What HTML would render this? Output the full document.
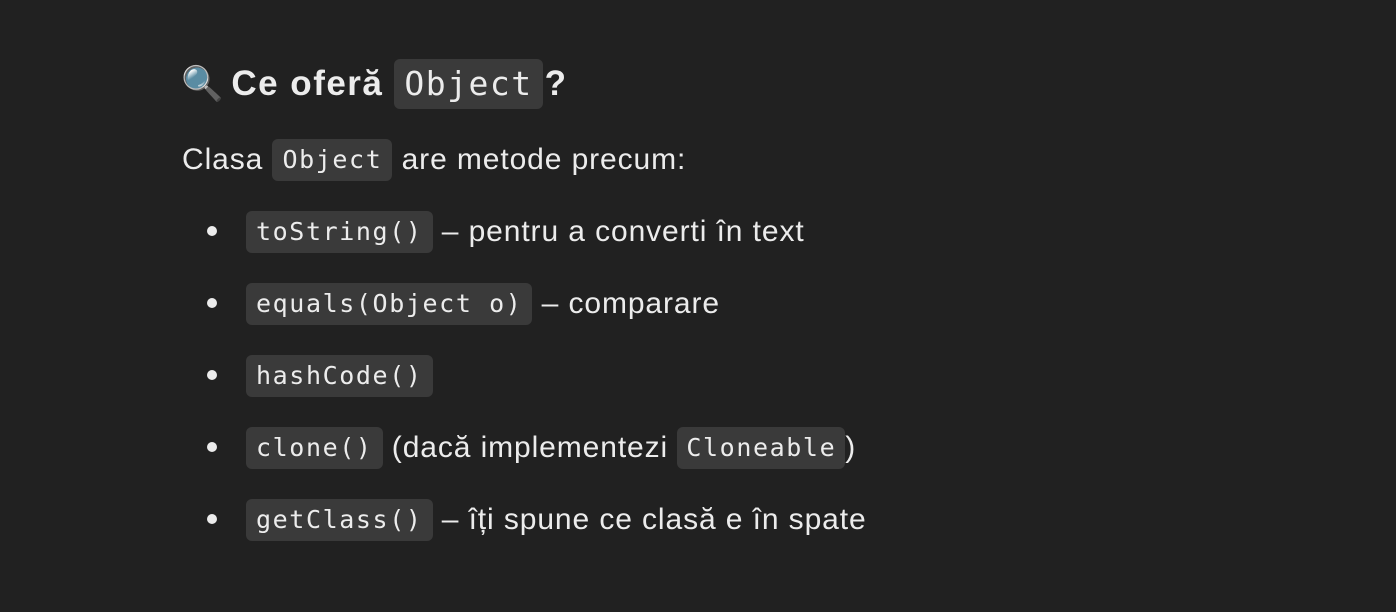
<!DOCTYPE html>
<html><head><meta charset="utf-8"><style>
html,body{margin:0;padding:0;background:#212121;width:1396px;height:612px;overflow:hidden}
body{font-family:"Liberation Sans","DejaVu Sans",sans-serif;color:#ececec;position:relative}
.l{position:absolute;left:0;white-space:nowrap;display:flex;align-items:center}
code{font-family:"DejaVu Sans Mono","Liberation Mono",monospace;background:#3a3a3a;border-radius:6px;color:#ececec}
.b code{font-size:25px;letter-spacing:1.6px;padding:0 10px 0 10px;height:42px;line-height:42px;display:inline-block}
.t{font-size:30px;letter-spacing:0.9px}
.dot{position:absolute;left:207px;width:10px;height:10px;border-radius:50%;background:#ececec}
</style></head><body>
<div class="l" style="left:181px;top:59px;height:50px">
 <span style="font-size:34px;margin-right:8px">🔍</span>
 <span style="font-size:35px;font-weight:bold;letter-spacing:1.5px">Ce oferă</span>
 <code style="font-size:33px;letter-spacing:1.5px;padding:0 10px;height:50px;line-height:50px;margin:0 2px 0 11px;display:inline-block">Object</code>
 <span style="font-size:35px;font-weight:bold">?</span>
</div>
<div class="l b" style="left:182px;top:139px;height:42px">
 <span class="t">Clasa&nbsp;</span><code>Object</code><span class="t">&nbsp;are metode precum:</span>
</div>
<div class="dot" style="top:226px"></div>
<div class="l b" style="left:246px;top:211px;height:42px"><code>toString()</code><span class="t">&nbsp;– pentru a converti în text</span></div>
<div class="dot" style="top:298px"></div>
<div class="l b" style="left:246px;top:283px;height:42px"><code>equals(Object o)</code><span class="t">&nbsp;– comparare</span></div>
<div class="dot" style="top:370px"></div>
<div class="l b" style="left:246px;top:355px;height:42px"><code>hashCode()</code></div>
<div class="dot" style="top:442px"></div>
<div class="l b" style="left:246px;top:427px;height:42px"><code>clone()</code><span class="t">&nbsp;(dacă implementezi&nbsp;</span><code style="padding-right:9px;padding-left:9px">Cloneable</code><span class="t">)</span></div>
<div class="dot" style="top:514px"></div>
<div class="l b" style="left:246px;top:499px;height:42px"><code>getClass()</code><span class="t">&nbsp;– îți spune ce clasă e în spate</span></div>
</body></html>
